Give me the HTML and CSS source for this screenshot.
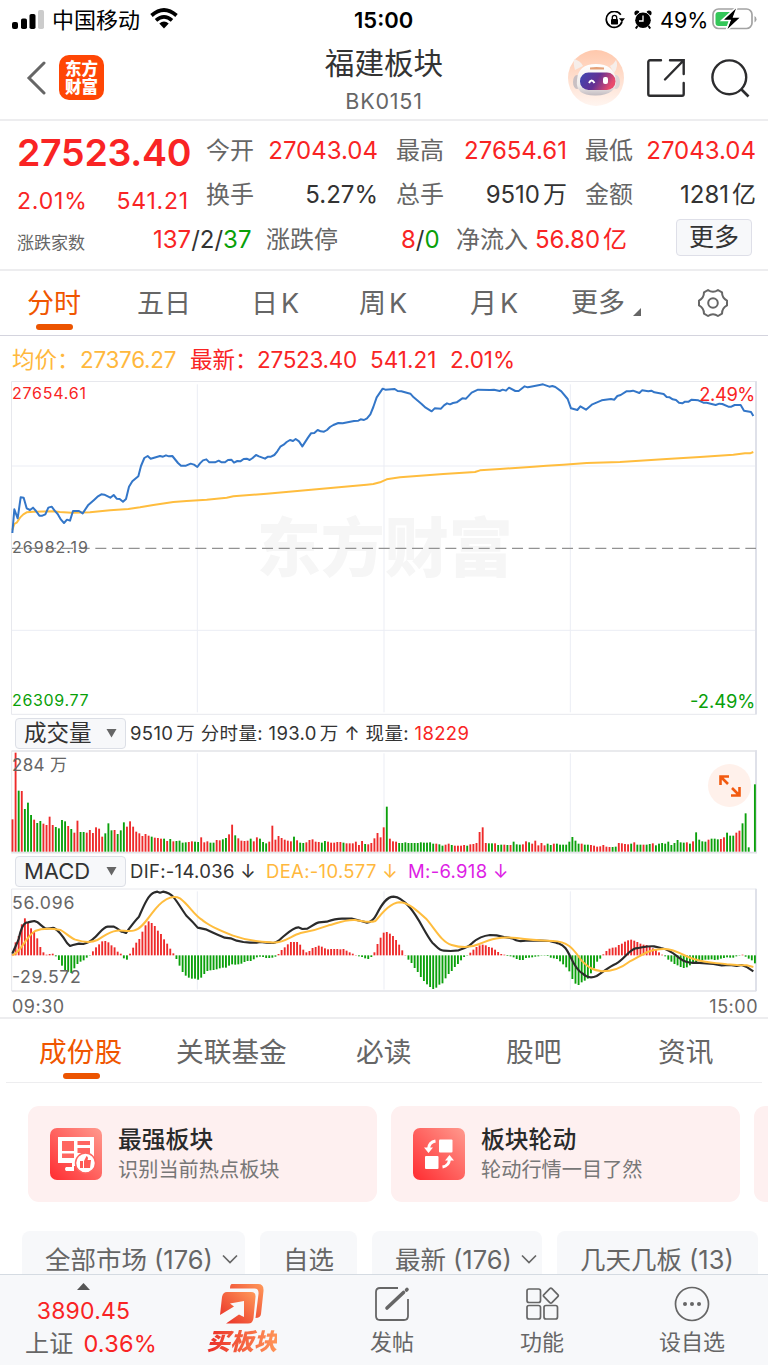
FILE: index.html
```html
<!DOCTYPE html>
<html lang="zh-CN">
<head>
<meta charset="utf-8">
<title>福建板块 BK0151</title>
<link rel="stylesheet" href="styles.css">
</head>
<body>
<div class="status">
  <svg class="signal" width="32" height="20" viewBox="0 0 32 20"><rect y="12" width="6" height="7" rx="2"/><rect x="9" y="8.500" width="6" height="10.500" rx="1.800"/><rect x="17.500" y="4" width="6" height="15" rx="1.800"/><rect x="26" y="0" width="6" height="19" rx="1.800" fill="#ccc"/></svg>
  <span class="carrier">中国移动</span>
  <svg class="wifi" width="28" height="21" viewBox="0 0 28 21"><path d="M1.500 7.500Q14-3.500 26.500 7.500M6 12.400Q14 5.400 22 12.400" fill="none" stroke="#000" stroke-width="3.700"/><path d="M9.300 15.600Q14 11.500 18.700 15.600L14 20.400Z"/></svg>
  <span class="clock">15:00</span>
  <svg class="lock" width="20" height="18" viewBox="0 0 20 18"><path d="M15.800 3.700A8 8 0 1 0 17 10.500" fill="none" stroke="#000" stroke-width="1.700"/><path d="M13.900 7.200H20L17 11Z"/><rect x="6" y="8" width="7" height="5.500" rx=".8"/><path d="M7.300 8V6.500a2.200 2.200 0 0 1 4.400 0V8" fill="none" stroke="#000" stroke-width="1.300"/></svg>
  <svg class="alarm" width="18" height="19" viewBox="0 0 18 19"><circle cx="9" cy="10.300" r="7.800"/><circle cx="3" cy="3" r="2.600"/><circle cx="15" cy="3" r="2.600"/><path d="M3.500 16 1.800 18.500M14.500 16l1.700 2.500" stroke="#000" stroke-width="2"/><path d="M1 6.500 6 2M12 2l5 4.500" stroke="#fff" stroke-width="1"/><path d="M9 5.500V11H5" fill="none" stroke="#fff" stroke-width="1.300"/></svg>
  <span class="charge">49%</span>
  <svg class="battery" width="46" height="24" viewBox="0 0 46 24"><rect x="1" y="2" width="39" height="19.500" rx="5.500" fill="none" stroke="#a3a3a3" stroke-width="1.700"/><path d="M42.500 9v6.500q2-.8 2-3.300t-2-3.200" fill="#a3a3a3"/><path d="M6.500 5H20v14H6.500a3 3 0 0 1-3-3V8a3 3 0 0 1 3-3" fill="#34c759"/><path d="M24.500.5 10.500 13.200h7.500L14.500 23.500 28.500 10.500H21.500Z" stroke="#fff" stroke-width="2.200"/><path d="M24 1.500 12 12.800h7.200L15.500 22 27.500 10.800H20.500Z"/></svg>
</div>
<header class="header">
  <svg class="back" width="20" height="34" viewBox="0 0 20 34"><path d="M18 2 3 17 18 32" fill="none" stroke="#666" stroke-width="3" stroke-linecap="round"/></svg>
  <div class="logo">东方<br>财富</div>
  <div class="heading"><h1>福建板块</h1><p>BK0151</p></div>
  <svg class="robot" width="56" height="56" viewBox="0 0 56 56">
    <defs><linearGradient id="sky" x2="0" y2="1"><stop stop-color="#ffc8ac"/><stop offset="1" stop-color="#fff5f0"/></linearGradient><linearGradient id="visor" y2=".3"><stop stop-color="#3b48b4"/><stop offset=".55" stop-color="#633093"/><stop offset="1" stop-color="#e84b6d"/></linearGradient><linearGradient id="shell" x2="0" y2="1"><stop stop-color="#fff"/><stop offset=".7" stop-color="#eeeae9"/><stop offset="1" stop-color="#c2bbc0"/></linearGradient></defs>
    <circle cx="28" cy="28" r="28" fill="url(#sky)"/>
    <path d="M7 20Q5 13 6 9q7 2 9 7M42 16q4-2 6-6 3 6-2 13" fill="#f6eeea"/>
    <ellipse cx="9" cy="32" rx="4" ry="7" fill="#c9c0c3"/><ellipse cx="48" cy="32" rx="4" ry="7" fill="#ddd4d5"/>
    <path d="M9 30Q10 14 28 14T48 30Q49 45 28 45.500T9 30" fill="url(#shell)"/>
    <rect x="12" y="22.500" width="35.500" height="17.500" rx="8.500" fill="url(#visor)"/>
    <path d="M22 17.500q6-1 14 0v2H22Z" fill="#e4a077"/><path d="M21 33q2.500-5 5.500 0" fill="none" stroke="#fff" stroke-width="2"/><rect x="35" y="27" width="5" height="7" rx="2" fill="#fff"/>
  </svg>
  <svg class="share" width="38" height="38" viewBox="0 0 38 38"><path d="M14 1.300H3A1.700 1.700 0 0 0 1.300 3v32A1.700 1.700 0 0 0 3 36.700h32a1.700 1.700 0 0 0 1.700-1.700V24M23 1.300H36.700V15M36 2 18 20.500" fill="none" stroke="#2c2c2e" stroke-width="2.400" stroke-linecap="round"/></svg>
  <svg class="search" width="40" height="40" viewBox="0 0 40 40"><circle cx="18.300" cy="18.300" r="16.900" fill="none" stroke="#2c2c2e" stroke-width="2.400"/><path d="M30 30l7.500 7.500" stroke="#2c2c2e" stroke-width="2.600"/></svg>
</header>
<section class="quote">
  <div class="top">
    <div class="now up"><b>27523.40</b><div><span>2.01%</span><span>541.21</span></div></div>
    <dl class="facts">
      <div><dt>今开</dt><dd class="up">27043.04</dd></div>
      <div><dt>最高</dt><dd class="up">27654.61</dd></div>
      <div><dt>最低</dt><dd class="up">27043.04</dd></div>
      <div><dt>换手</dt><dd>5.27%</dd></div>
      <div><dt>总手</dt><dd>9510<i>万</i></dd></div>
      <div><dt>金额</dt><dd>1281<i>亿</i></dd></div>
    </dl>
  </div>
  <div class="breadth">
    <span class="small">涨跌家数</span>
    <span class="num"><span class="up">137</span>/2/<span class="down">37</span></span>
    <span class="lab">涨跌停</span>
    <span class="num"><span class="up">8</span>/<span class="down">0</span></span>
    <span class="lab">净流入</span>
    <span class="num up">56.80<i>亿</i></span>
    <span class="more">更多</span>
  </div>
</section>
<nav class="periods">
  <span class="on">分时</span><span>五日</span><span>日<i>K</i></span><span>周<i>K</i></span><span>月<i>K</i></span><span class="drop">更多<svg width="8" height="8"><path d="M8 0V8H0Z" fill="#666"/></svg></span>
  <svg class="gear" width="32" height="30" viewBox="0 0 32 30"><path d="M11 2Q16 5.500 21 2L25 4.300Q25 10 30 12.600V17.400Q25 20 25 25.700L21 28Q16 24.500 11 28L7 25.700Q7 20 2 17.400V12.600Q7 10 7 4.300Z" fill="none" stroke="#666" stroke-width="2" stroke-linejoin="round"/><circle cx="16" cy="15" r="4.800" fill="none" stroke="#666" stroke-width="2"/></svg>
</nav>
<p class="legend"><span class="avg">均价：</span><span class="avg n1">27376.27</span><span class="up l2">最新：</span><span class="up n2">27523.40</span><span class="up n3">541.21</span><span class="up n4">2.01%</span></p>
<svg class="chart" width="768" height="335" viewBox="0 18 2304 1005">
  <text class="mark" x="770" y="589" textLength="768">东方财富</text>
  <path class="grid" d="M36 273H2268M36 766H2268M592 28V1012M1152 28V1012M1711 28V1012"/>
  <path class="frame" d="M34.500 19.500H2269V1018H34.500Z"/><path class="edge" d="M2268 19V1018"/>
  <path d="M36 520H2268" stroke="#929292" stroke-width="4" stroke-dasharray="33 17"/>
  <polyline class="line gold" points="37,465 43,447 51,442 60,428 70,418 80,412 100,410 160,409 180,411 215,413 270,412 330,406 385,402 420,397 460,390 520,381 560,378 620,374 680,368 700,364 800,356 900,347 1000,338 1100,329 1120,327 1140,322 1160,313 1200,307 1260,302 1330,297 1425,291 1440,286 1500,282 1600,275 1640,272 1690,269 1760,264 1860,261 2000,252 2100,246 2200,239 2235,235 2250,235 2260,231"/>
  <polyline class="line blue" points="37,474 43,403 53,430 62,367 71,368 80,400 90,405 99,398 108,408 118,422 127,422 136,418 145,398 155,395 164,407 173,417 183,434 192,444 201,434 210,437 219,408 237,408 248,415 264,391 283,374 294,364 304,358 313,359 331,368 341,360 350,371 359,372 369,380 378,372 387,335 397,319 405,312 415,304 423,273 433,249 443,243 452,251 470,246 480,243 489,245 498,241 507,244 517,243 534,264 543,272 558,272 572,266 582,269 592,276 600,265 609,256 619,253 628,262 645,262 656,257 665,262 675,262 684,255 694,254 702,263 712,258 721,259 731,252 740,251 749,255 758,249 768,240 777,244 795,251 804,245 813,245 823,240 832,229 841,215 851,209 860,201 870,195 879,198 887,192 897,199 907,214 924,188 933,175 943,174 953,165 962,169 972,170 981,165 990,156 1000,150 1015,144 1028,145 1062,138 1075,137 1082,133 1092,135 1101,130 1111,118 1120,96 1130,67 1148,41 1156,44 1184,42 1193,48 1204,49 1231,56 1241,67 1264,86 1277,98 1295,109 1304,100 1323,101 1332,91 1341,85 1350,88 1359,84 1370,82 1387,70 1398,71 1415,53 1434,44 1470,45 1482,44 1499,48 1508,44 1518,47 1527,38 1546,48 1556,48 1574,34 1583,37 1592,35 1619,30 1629,28 1648,35 1657,33 1666,36 1684,49 1703,72 1713,100 1732,105 1741,94 1758,104 1777,88 1805,76 1833,72 1843,74 1852,63 1862,60 1879,49 1890,49 1899,47 1918,54 1926,46 1945,49 1954,47 1963,52 1991,57 2000,66 2009,67 2018,73 2028,75 2037,83 2047,85 2055,80 2066,80 2075,74 2095,76 2110,83 2120,83 2147,90 2158,86 2167,87 2185,95 2194,95 2204,90 2222,90 2232,107 2253,111 2260,123"/>
  <text class="tick up" x="36" y="71" textLength="222">27654.61</text><text class="tick gray" x="36" y="533" textLength="228">26982.19</text><text class="tick down" x="36" y="992" textLength="230">26309.77</text>
  <text class="tick pct up" x="2098" y="77" textLength="168">2.49%</text><text class="tick pct down" x="2070" y="998" textLength="196">-2.49%</text>
</svg>
<div class="pane"><span class="select">成交量<svg width="11" height="10"><path d="M.5 1H10.500L5.500 9.500Z" fill="#666"/></svg></span><p class="info vol">9510<i>万</i> 分时量: 193.0<i>万</i> ↑ 现量: <span class="up">18229</span></p></div>
<div class="stack">
<svg class="chart" width="768" height="104" viewBox="0 120 2304 312">
  <path class="grid" d="M592 130V425M1152 130V425M1711 130V425"/>
  <path class="frame thick" d="M34.500 123H2268V428H34.500"/><path class="frame" d="M35 123V430"/><path class="edge" d="M2268 121V430"/>
  <g id="volume"></g>
  <text class="tick gray amount" x="36" y="184" textLength="165">284 万</text>
</svg>
<span class="expand"><svg width="22" height="22" viewBox="0 0 22 22"><path d="M10 1.500H1.500V10M2 2l7 7M20.500 12v8.500H12M20 20l-7-7" fill="none" stroke="#f25a10" stroke-width="2.600"/></svg></span>
</div>
<div class="pane"><span class="select macd">MACD<svg width="11" height="10"><path d="M.5 1H10.500L5.500 9.500Z" fill="#666"/></svg></span><p class="info"><span class="dif">DIF:-14.036 ↓</span><span class="dea">DEA:-10.577 ↓</span><span class="m">M:-6.918 ↓</span></p></div>
<svg class="chart" width="768" height="104" viewBox="0 99 2304 312">
  <path class="grid" d="M592 109V404M1152 109V404M1711 109V404"/>
  <path class="frame" d="M35 408V102H2268"/><path class="frame thick" d="M35 408H2268"/><path class="edge" d="M2268 101V409"/>
  <g id="macd"></g>
  <path class="line black" d="M37 296C45 275 52 265 56 252Q65 208 78 203L84 202L93 200L103 198L113 202C124 211 130 217 137 221C148 221 155 218 162 219C178 227 190 246 201 264L210 273L219 270L237 266L250 267C266 264 276 256 285 247C298 236 308 217 323 215H342C353 219 357 225 364 230L370 231L378 234C389 220 400 202 417 185C431 153 444 119 464 112L472 110L480 113L489 110C503 112 512 117 521 127C536 145 546 165 560 183Q580 202 593 218L617 223C641 235 660 241 674 248L692 250L710 257L730 261L750 263H770L780 261L800 263L820 264C831 263 837 257 845 249C865 232 880 217 895 217L907 222L922 221C935 213 945 205 957 202L980 200C1000 193 1010 190 1030 191H1055L1083 198L1101 203C1114 202 1121 196 1130 178C1145 148 1160 125 1181 125C1200 126 1215 141 1229 157C1259 192 1274 234 1297 263C1313 278 1318 287 1331 287L1352 288L1376 286C1399 276 1402 280 1418 263C1436 247 1450 242 1470 240L1490 241L1512 246L1537 250C1554 260 1562 259 1577 257L1620 257L1649 258C1670 263 1684 266 1696 279C1713 300 1721 341 1747 355C1760 368 1775 370 1790 363C1810 351 1825 336 1848 326C1870 315 1885 287 1907 280C1930 277 1944 272 1962 274L1983 279C2010 283 2025 300 2041 311C2056 323 2068 325 2088 323L2140 327L2165 331L2190 330L2210 333L2225 330L2242 337L2260 349"/>
  <path class="line gold" d="M37 301C66 289 76 246 105 228C126 219 156 220 182 225C198 234 210 248 226 254C248 261 275 263 292 255C310 246 324 230 350 227C370 225 386 232 404 226C430 221 452 174 475 152C497 130 519 120 540 130C566 149 580 177 604 193C628 215 670 231 699 242C735 255 770 260 811 262C850 267 871 243 902 234C930 229 960 221 986 211C1010 205 1035 193 1065 195C1090 198 1108 205 1126 198C1145 177 1168 145 1198 142C1225 142 1250 165 1280 193C1304 220 1325 262 1355 270C1384 279 1416 277 1438 267C1473 252 1501 244 1550 249C1590 255 1630 257 1658 258C1710 259 1724 290 1745 317C1769 341 1780 345 1806 349C1840 349 1865 338 1888 320C1920 306 1940 284 1979 283C2025 277 2052 307 2092 315C2125 325 2150 323 2180 328L2210 330L2240 331L2260 336"/>
  <text class="tick gray mac" x="36" y="163" textLength="187">56.096</text><text class="tick gray mac" x="36" y="385" textLength="206">-29.572</text>
</svg>
<div class="hours"><span>09:30</span><span>15:00</span></div>
<nav class="sections"><span class="on">成份股</span><span>关联基金</span><span>必读</span><span>股吧</span><span>资讯</span></nav>
<div class="cards">
  <div class="card"><svg width="52" height="52" viewBox="0 0 52 52"><defs><linearGradient id="red" x1="0" y1="1" x2="1" y2="0"><stop stop-color="#ff2c31"/><stop offset="1" stop-color="#ff9a8e"/></linearGradient></defs><rect width="52" height="52" rx="7" fill="url(#red)"/><path d="M8 9H44V32H27V38H24V43H16q-2-2 0-4H22V35H8Z" fill="#fff"/><path d="M12 13H24V23H12ZM27.500 13H40V17H27.500ZM27.500 20H40V25H27.500ZM12 25.500H24V30H12Z" fill="#ff6661"/><circle cx="35.500" cy="35" r="10" fill="#fff" stroke="#ff6661" stroke-width="1.500"/><path d="M30 33H33V40H30ZM34 33 36.500 28q2.300 1 1 4h3.500l-1 8H34Z" fill="#ff5a55"/></svg><div><h2>最强板块</h2><p>识别当前热点板块</p></div></div>
  <div class="card"><svg width="52" height="52" viewBox="0 0 52 52"><rect width="52" height="52" rx="7" fill="url(#red)"/><rect x="26" y="11.500" width="13.500" height="13" rx="1" fill="#fff"/><rect x="12" y="28" width="13.500" height="13" rx="1" fill="#fff"/><path d="M22.500 13Q16 14 15.500 21M29.500 39Q36 38 36.500 31" stroke="#fff" stroke-width="3" fill="none"/><path d="M11 19.500H20L15.500 25ZM32 32.500H41L36.500 27Z" fill="#fff"/></svg><div><h2>板块轮动</h2><p>轮动行情一目了然</p></div></div>
  <div class="card"></div>
</div>
<div class="chips">
  <span class="c1">全部市场<i>(176)</i><svg width="16" height="10" viewBox="0 0 16 10"><path d="M1 1.500 8 8.500 15 1.500" fill="none" stroke="#666" stroke-width="1.700"/></svg></span><span class="c2">自选</span><span class="c3">最新<i>(176)</i><svg width="16" height="10" viewBox="0 0 16 10"><path d="M1 1.500 8 8.500 15 1.500" fill="none" stroke="#666" stroke-width="1.700"/></svg></span><span class="c4">几天几板<i>(13)</i></span>
</div>
<footer class="dock">
  <div class="index"><svg width="13" height="7"><path d="M6.500 0 13 7H0Z" fill="#555"/></svg><span class="up">3890.45</span><p>上证 <span class="up">0.36%</span></p></div>
  <div class="tab buy"><svg width="44" height="40" viewBox="0 0 44 40"><defs><linearGradient id="fire" x1="0" y1="1" x2="1" y2="0"><stop stop-color="#e82a24"/><stop offset="1" stop-color="#ff9a5a"/></linearGradient></defs><path d="M12 0H38Q44 0 43.500 7L41 30Q40.500 34 35.500 34L38.500 10Q39 4.500 34.500 4.500H10Q10 0 12 0" fill="url(#fire)"/><path d="M7 8H31Q36 8 35.500 13L33.500 34Q33 39.500 28 39.500H6L19 30.500 24 33V17L10 19.500 14 22.500 0 31 2 13Q3 8 7 8" fill="url(#fire)"/></svg><span>买板块</span></div>
  <div class="tab"><svg width="36" height="36" viewBox="0 0 36 36"><path d="M24 2H6Q2 2 2 6V30Q2 34 6 34H30Q34 34 34 30V13" fill="none" stroke="#666" stroke-width="1.800"/><path d="M13 22 29.500 6.500M32.500 4l.5-.5" stroke="#666" stroke-width="3.600" stroke-linecap="round"/></svg><span>发帖</span></div>
  <div class="tab"><svg width="36" height="36" viewBox="0 0 36 36"><g fill="none" stroke="#666" stroke-width="1.700"><rect x="3" y="3" width="13.500" height="13.500" rx="2"/><rect x="3" y="19.500" width="13.500" height="13.500" rx="2"/><rect x="20" y="19.500" width="13.500" height="13.500" rx="2"/><rect x="21.200" y="4" width="11.300" height="11.300" rx="1.500" transform="rotate(45 26.850 9.650)"/></g></svg><span>功能</span></div>
  <div class="tab"><svg width="36" height="36" viewBox="0 0 36 36"><circle cx="18" cy="18" r="16.500" fill="none" stroke="#666" stroke-width="1.700"/><circle cx="11" cy="18" r="2" fill="#666"/><circle cx="18" cy="18" r="2" fill="#666"/><circle cx="25" cy="18" r="2" fill="#666"/></svg><span>设自选</span></div>
</footer>
<script src="charts.js"></script>
</body>
</html>
```
FILE: styles.css
```css
* { box-sizing: border-box; margin: 0; padding: 0; }
body { width: 768px; height: 1366px; overflow: hidden; background: #fff; color: #333; font-family: Inter, "Noto Sans CJK SC", sans-serif; white-space: nowrap; }
i { font-style: normal; margin-left: 3px; }
svg { flex: none; display: block; }
.up { color: #f92424; }
.down { color: #09a009; }
.status { height: 40px; display: flex; align-items: center; padding-left: 12px; color: #000; font-size: 22px; line-height: 38px; }
.signal { margin-right: 8px; margin-top: -1px; }
.carrier { width: 89px; }
.wifi { margin: -3px 0 0 9px; }
.clock { margin-left: 176px; width: 62px; font-weight: 600; font-size: 22px; }
.lock { margin-left: 189px; }
.alarm { margin: -2px 0 0 9px; }
.charge { margin-left: 8px; width: 50px; font-size: 21.500px; }
.battery { margin-left: 2px; margin-top: -2px; }
.header { height: 81px; border-bottom: 2px solid #ededef; display: flex; align-items: center; padding-left: 26px; }
.back { margin-top: -3px; }
.logo { margin: -4px 0 0 13px; width: 45px; height: 45px; border-radius: 10px; background: #ff4605; color: #fff; font-size: 16.500px; line-height: 18.500px; font-weight: 900; text-align: center; padding-top: 4.500px; }
.heading { margin-left: 190px; width: 180px; text-align: center; }
.heading h1 { font-size: 29.600px; line-height: 40px; font-weight: 400; margin-top: 1px; }
.heading p { font-size: 21.500px; line-height: 32px; color: #666; margin-top: 2px; letter-spacing: .8px; }
.robot { margin: -3px 0 0 94px; }
.share { margin: -3px 0 0 23px; }
.search { margin: -2px 0 0 26px; }
.quote { height: 150px; border-bottom: 2px solid #ededef; padding: 0 12px 0 17px; }
.top { display: flex; height: 92px; }
.now { width: 189px; }
.now b { display: block; font-size: 37.500px; line-height: 46px; margin-top: 9px; font-weight: 600; letter-spacing: -.25px; }
.now div { display: flex; justify-content: space-between; width: 172px; font-size: 23px; line-height: 36px; margin-top: 7px; letter-spacing: .8px; }
.facts { display: grid; grid-template-columns: 172px 171px 171px; column-gap: 18px; grid-auto-rows: 44px; padding-top: 8px; font-size: 24px; line-height: 44px; }
.facts div { display: flex; justify-content: space-between; }
.facts dt, .lab { color: #666; font-size: 24px; }
.breadth { display: flex; align-items: center; height: 52px; font-size: 24px; line-height: 44px; padding-top: 1px; }
.small { width: 136px; font-size: 17px; color: #666; padding-top: 7px; }
.breadth .num:nth-child(2) { width: 113px; }
.lab:nth-child(3) { width: 135px; }
.breadth .num:nth-child(4) { width: 55px; }
.lab:nth-child(5) { width: 79px; }
.breadth .num:nth-child(6) { width: 141px; }
.more { width: 76px; height: 37px; margin-top: -5px; border: 1.500px solid #dedfe8; border-radius: 4px; background: #f7f8fa; text-align: center; font-size: 25px; line-height: 35px; }
.periods { height: 65px; border-bottom: 1px solid #d4d4de; display: flex; font-size: 27px; line-height: 65px; color: #666; padding-left: 27px; }
.periods i { margin-left: 3px; }
.periods span { width: 110px; }
.periods span:nth-child(2) { width: 114px; }
.periods span:nth-child(3) { width: 108px; }
.periods span:nth-child(4) { width: 111px; }
.periods span:nth-child(5) { width: 101px; }
.periods .drop { width: 126px; display: flex; align-items: flex-end; }
.drop svg { margin: 0 0 19px 8px; }
.gear { margin-top: 17px; }
.on { color: #f05600 !important; position: relative; }
.on::after { content: ""; position: absolute; height: 6px; width: 37px; border-radius: 3px; background: #ec5400; left: 9px; bottom: 5px; }
.legend { height: 45px; display: flex; padding-left: 12px; font-size: 22.500px; line-height: 47px; }
.avg { color: #ffb83d; width: 68px; }
.legend .n1 { width: 110px; letter-spacing: -.3px; }
.l2 { width: 67px; }
.n2 { width: 113px; letter-spacing: -.3px; }
.n3 { width: 80px; }
.grid { stroke: #ebedf4; stroke-width: 3; fill: none; }
.frame { stroke: #e7e8ed; stroke-width: 3; fill: none; }
.thick { stroke-width: 5; stroke: #e2e3e8; }
.edge { stroke: #dfe1e9; stroke-width: 6; }
.line { fill: none; stroke-width: 6; stroke-linejoin: round; }
.gold { stroke: #ffbd3e; }
.blue { stroke: #3376c8; }
.black { stroke: #2b2b2b; stroke-width: 6.500; }
.mark { font-size: 192px; font-weight: 900; fill: #f6f6f6; }
.tick { font-size: 48px; fill: #666; }
.tick.up { fill: #f92424; }
.tick.down { fill: #09a009; }
.tick.pct { font-size: 55px; }
.tick.mac { font-size: 53px; }
.tick.amount { font-size: 51px; }
.pane { height: 34px; display: flex; align-items: center; padding-left: 15px; }
.select { width: 111px; height: 31px; border: 1px solid #dcdfe6; border-radius: 4px; background: #f7f8fa; display: flex; align-items: center; justify-content: space-between; padding: 0 8px; font-size: 22.500px; line-height: 28px; }
.select.macd { font-size: 22px; }
.info { margin-left: 4px; font-size: 18.500px; line-height: 32px; letter-spacing: .3px; }
.info.vol { letter-spacing: .35px; }
.info span { display: inline-block; }
.dif { width: 136px; }
.dea { width: 142px; color: #ffb83d; }
.m { color: #dd1ee5; }
.stack { position: relative; height: 104px; }
.expand { position: absolute; left: 708px; top: 14px; width: 43px; height: 43px; border-radius: 50%; background: #fff1eb; display: flex; align-items: center; justify-content: center; }
.hours { height: 27px; border-bottom: 2px solid #ededef; padding: 0 10px 0 12px; display: flex; justify-content: space-between; font-size: 18px; line-height: 29px; letter-spacing: .5px; color: #666; }
.sections { margin: 0 6px; height: 64px; border-bottom: 1.500px solid #ededef; display: flex; font-size: 27.700px; line-height: 66px; color: #666; padding-left: 33px; }
.sections span { width: 137px; flex: none; }
.sections span:nth-child(2) { width: 180px; }
.sections span:nth-child(3) { width: 150px; }
.sections span:nth-child(4) { width: 152px; }
.sections span:nth-child(5) { width: 57px; }
.sections .on::after { left: 24px; bottom: 3px; }
.cards { margin-top: 23px; padding-left: 28px; display: flex; gap: 14px; height: 96px; overflow: hidden; }
.card { flex: none; width: 349px; height: 96px; border-radius: 11px; background: #fef0f0; display: flex; align-items: center; padding-left: 22px; gap: 16px; }
.card h2 { font-size: 23.800px; line-height: 32px; font-weight: 500; color: #2a2a2a; }
.card p { font-size: 20.200px; line-height: 28px; color: #777; }
.chips { height: 43px; margin-top: 29px; padding-left: 22px; display: flex; gap: 15px; overflow: hidden; }
.chips > span { height: 60px; background: #f7f8fa; border-radius: 8px; font-size: 25.500px; line-height: 57px; color: #666; display: flex; flex: none; }
.chips i { margin-left: 7px; }
.chips svg { margin: 23px 0 0 9px; }
.c1 { width: 223px; padding-left: 23px; }
.c2 { width: 97px; padding-left: 23px; }
.c3 { width: 170px; padding-left: 23px; }
.c4 { width: 201px; padding-left: 23px; }
.dock { height: 91px; background: #f7f8fa; border-top: 1px solid #d5dbe2; display: flex; }
.index { width: 167px; padding-top: 8px; display: flex; flex-direction: column; align-items: center; font-size: 23px; line-height: 34px; letter-spacing: .2px; }
.index > span { margin-top: 4px; }
.index p { line-height: 32px; color: #666; margin-left: 15px; font-size: 24px; word-spacing: 3px; }
.index p span { font-size: 23.500px; }
.tab { width: 150px; display: flex; flex-direction: column; align-items: center; color: #666; font-size: 22px; line-height: 32px; }
.tab svg { margin: 11px 0 4px; }
.tab.buy svg { margin: 9px 0 2px; }
.buy span { font-weight: 900; font-style: italic; font-size: 23.500px; background: linear-gradient(90deg, #ea2d27, #ff9558); -webkit-background-clip: text; background-clip: text; color: transparent; }
```
FILE: charts.js
```js
const STEP = 9.28;
const START = 37.5;
const RED = '#ee2a2a';
const GREEN = '#0ba00b';

function bar(x, y, h, color) {
  return `<rect x="${x - 2.8}" y="${y}" width="5.6" height="${h}" fill="${color}"/>`;
}

const volume = `r97 r297 g183 r182 g128 g147 g110 r96 g86 g92 r84 r80 r105 r80 g74 g70 g95 g91 r77 g68 r57 r93 g59 g59 r57 r65 r56 r73 r69 r45 g55 g85 g64 r65 g53 g64 g88 r75 r91 r75 r60 r55 r47 r53 r48 g45 r42 r41 r39 g39 r32 g38 r31 g32 g33 g27 g28 r29 r31 g30 g29 r43 r28 r31 g27 g27 r35 r34 g37 g41 r52 r81 g49 r40 r33 r32 r33 g39 r31 r43 g39 g29 g25 r30 r78 r36 r47 r41 r36 r33 r31 g45 r34 g27 g26 r28 r35 r37 r30 r29 g27 g32 r30 r27 r27 r29 r29 g27 r25 r25 r25 r30 r20 r32 g23 r22 r26 r40 r56 r43 r73
g135 r39 r31 r30 g26 g26 g28 g26 g26 g26 g26 g28 g27 g27 g28 g24 r24 g22 g18 r21 r24 g20 r18 r18 r18 r20 g18 r22 r23 r26 r59 r73 r26 g25 g25 r25 g20 g21 r21 g20 r20 g30 g22 g21 r22 r31 g28 r24 r33 r19 r26 r19 g24 g20 r24 g24 g21 g21 g21 g30 g44 g33 g24 r24 g21 g21 r20 r18 r15 r16 r20 r15 r14 g14 g15 r26 r25 r23 r22 g24 r28 g21 g21 r21 g21 g23 r25 g19 g24 g26 g24 g30 g20 g26 g35 g28 g27 r28 g24 r31 g58 g36 g31 g30 r36 g39 g39 g37 r38 r43 g57 g48 g48 r57 r63 g85 g115 g13 g0 g202`.split(/\s+/);

document.getElementById('volume').innerHTML = volume.map((v, i) => {
  const h = Number(v.slice(1));
  return bar(START + i * STEP, 425 - h, h, v[0] === 'r' ? RED : GREEN);
}).join('');

const levels = [298,262,243,208,190,203,220,231,250,276,292,299,297,296,304,315,332,348,350,354,340,327,320,316,308,302,289,277,268,259,258,262,271,277,290,296,310,314,296,278,263,252,230,211,199,204,213,227,237,253,266,281,295,312,332,351,362,368,371,371,374,368,357,348,346,345,343,340,338,338,332,328,329,328,326,321,318,318,313,307,305,306,309,309,308,305,297,285,277,268,261,261,261,269,284,292,288,279,276,272,275,280,283,282,282,282,283,282,287,292,296,300,304,306,310,312,306,292,267,248,233,
231,236,243,255,269,286,300,314,324,339,351,366,378,388,396,402,398,389,385,370,357,348,336,327,316,306,302,293,284,276,271,269,271,276,278,284,291,297,299,303,304,307,312,315,315,309,308,307,305,304,302,302,303,308,310,312,319,328,337,349,372,386,390,382,377,371,355,340,320,311,298,288,281,278,277,270,266,260,256,254,257,261,266,269,270,276,280,285,292,299,304,314,320,327,331,336,339,337,331,327,322,318,316,314,314,313,315,314,311,309,307,308,308,304,302,299,305,311,316,325];

document.getElementById('macd').innerHTML = levels.map((y, i) =>
  bar(START + i * STEP, Math.min(y, 301), Math.abs(301 - y), y < 301 ? RED : GREEN)
).join('');
```
